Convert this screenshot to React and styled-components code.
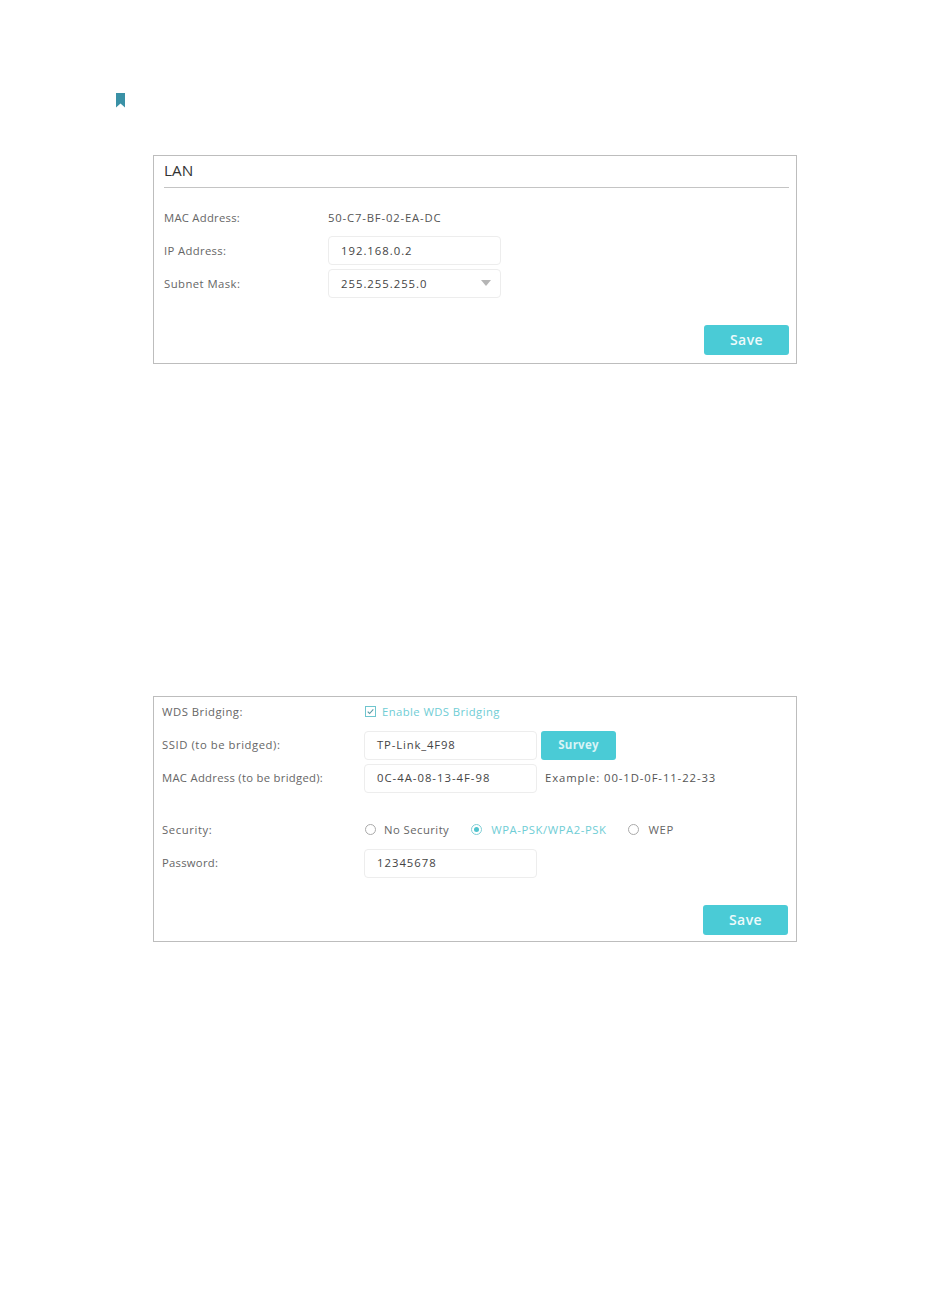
import React from "react";
import styled, { createGlobalStyle } from "styled-components";

const Global = createGlobalStyle`
  html, body { margin: 0; padding: 0; background: #fff; }
  body { font-family: "Open Sans", "Liberation Sans", sans-serif; color: #555; }
`;

const Page = styled.div`
  width: 950px;
  height: 1306px;
  box-sizing: border-box;
  padding-top: 93px;
  overflow: hidden;
`;

const NoteRow = styled.div`
  padding-left: 116px;
  height: 15px;
  display: flex;
`;

const Panel = styled.section`
  --raise: ${(p) => p.$raise || 0}px;
  box-sizing: border-box;
  width: 644px;
  margin-left: 153px;
  margin-top: ${(p) => p.$top}px;
  height: ${(p) => p.$height}px;
  border: 1px solid #bdbdbd;
  padding: ${(p) => p.$padding};
  display: flex;
  flex-direction: column;
`;

const Title = styled.h2`
  margin: 0 0 13px;
  height: 32px;
  box-sizing: border-box;
  border-bottom: 1px solid #c4c4c4;
  font-size: 15.3px;
  font-weight: 400;
  line-height: 29px;
  color: #333;
`;

const Row = styled.div`
  display: flex;
  align-items: center;
  height: ${(p) => p.$h || 33}px;
  margin-top: ${(p) => p.$mt || 0}px;
  margin-bottom: ${(p) => p.$mb || 0}px;
`;

const Label = styled.div`
  width: ${(p) => p.$w}px;
  flex: none;
  box-sizing: border-box;
  padding-bottom: var(--raise);
  font-size: 11.3px;
  letter-spacing: ${(p) => p.$ls || 0.3}px;
  color: #666;
`;

const Value = styled.div`
  font-size: 11.3px;
  letter-spacing: 0.82px;
  color: #555;
`;

const Field = styled.div`
  box-sizing: border-box;
  position: relative;
  width: 173px;
  height: 29px;
  border: 1px solid #ededed;
  border-radius: 4px;
  padding-left: 12px;
  padding-bottom: var(--raise);
  display: flex;
  align-items: center;
  font-size: 11.3px;
  letter-spacing: ${(p) => p.$ls || 1}px;
  color: #444;
`;

const Caret = styled.span`
  position: absolute;
  right: 9px;
  top: 10px;
  width: 0;
  height: 0;
  border-left: 5px solid transparent;
  border-right: 5px solid transparent;
  border-top: 6px solid #b5b5b5;
`;

const Button = styled.button`
  box-sizing: border-box;
  border: 0;
  border-radius: 3px;
  background: #4acbd6;
  color: ${(p) => p.$color};
  font-family: inherit;
  padding: 0 0 2px;
  font-size: ${(p) => p.$size}px;
  font-weight: ${(p) => p.$weight};
  letter-spacing: ${(p) => p.$ls}px;
  width: ${(p) => p.$w}px;
  height: ${(p) => p.$h}px;
  margin-left: ${(p) => p.$ml || 0}px;
`;

const Footer = styled.div`
  margin-top: auto;
  display: flex;
  justify-content: flex-end;
`;

const Hint = styled.div`
  margin-left: 8px;
  padding-bottom: var(--raise);
  font-size: 11.3px;
  letter-spacing: 0.9px;
  color: #555;
`;

const CheckWrap = styled.div`
  display: flex;
  align-items: center;
  gap: 6px;
  padding-left: 1px;
  padding-bottom: var(--raise);
  font-size: 11.3px;
  letter-spacing: 0.41px;
  color: #6fcdd5;
`;

const RadioOption = styled.div`
  display: flex;
  align-items: center;
  gap: ${(p) => p.$gap}px;
  margin-right: ${(p) => p.$mr}px;
  font-size: 11.3px;
  letter-spacing: ${(p) => p.$ls}px;
  color: ${(p) => (p.$on ? "#6fcdd5" : "#666")};
`;

const RadioGroup = styled.div`
  display: flex;
  align-items: center;
  padding-left: 1px;
  padding-bottom: var(--raise);
`;

const Ring = styled.span`
  box-sizing: border-box;
  width: 11px;
  height: 11px;
  border-radius: 50%;
  border: 1px solid ${(p) => (p.$on ? "#7fcfd6" : "#aaa")};
  display: flex;
  align-items: center;
  justify-content: center;
  &::after {
    content: "";
    display: ${(p) => (p.$on ? "block" : "none")};
    width: 5px;
    height: 5px;
    border-radius: 50%;
    background: #4fc3cd;
  }
`;

const Bookmark = () => (
  <svg width="9" height="15" viewBox="0 0 9 15" aria-hidden="true">
    <path d="M0 0H9V14.5L4.5 10.5L0 14.5Z" fill="#3a91a6" />
  </svg>
);

const CheckBox = () => (
  <svg width="11" height="11" viewBox="0 0 11 11" aria-hidden="true">
    <rect x="0.5" y="0.5" width="10" height="10" fill="none" stroke="#6fc5ce" />
    <path d="M2.7 5.6L4.6 7.5L8.3 3.4" fill="none" stroke="#5a9aa5" strokeWidth="1.1" />
  </svg>
);

const SaveButton = () => (
  <Button $w={85} $h={30} $size={14} $ls={0.4} $weight={600} $color="#eefafb">Save</Button>
);

export default function App() {
  return (
    <Page>
      <Global />
      <NoteRow>
        <Bookmark />
      </NoteRow>
      <Panel $top={47} $height={209} $padding="0 7px 8px 10px">
        <Title>LAN</Title>
        <Row>
          <Label $w={164} $ls={0.25}>MAC Address:</Label>
          <Value>50-C7-BF-02-EA-DC</Value>
        </Row>
        <Row>
          <Label $w={164} $ls={0.35}>IP Address:</Label>
          <Field>192.168.0.2</Field>
        </Row>
        <Row>
          <Label $w={164} $ls={0.45}>Subnet Mask:</Label>
          <Field>
            255.255.255.0
            <Caret />
          </Field>
        </Row>
        <Footer>
          <SaveButton />
        </Footer>
      </Panel>
      <Panel $top={332} $height={246} $padding="0 8px 6px 8px" $raise={2}>
        <Row $h={30} $mb={2}>
          <Label $w={202} $ls={0.5}>WDS Bridging:</Label>
          <CheckWrap>
            <CheckBox />
            Enable WDS Bridging
          </CheckWrap>
        </Row>
        <Row>
          <Label $w={202} $ls={0.55}>SSID (to be bridged):</Label>
          <Field $ls={0.85}>TP-Link_4F98</Field>
          <Button $w={75} $h={29} $size={11.5} $ls={0.25} $weight={700} $color="#d8f4f6" $ml={4}>Survey</Button>
        </Row>
        <Row>
          <Label $w={202} $ls={0.28}>MAC Address (to be bridged):</Label>
          <Field>0C-4A-08-13-4F-98</Field>
          <Hint>Example: 00-1D-0F-11-22-33</Hint>
        </Row>
        <Row $mt={19}>
          <Label $w={202} $ls={0.6}>Security:</Label>
          <RadioGroup>
            <RadioOption $mr={22} $gap={8} $ls={0.45}><Ring />No Security</RadioOption>
            <RadioOption $mr={22} $gap={9} $ls={0.55} $on><Ring $on />WPA-PSK/WPA2-PSK</RadioOption>
            <RadioOption $mr={0} $gap={9} $ls={0.7}><Ring />WEP</RadioOption>
          </RadioGroup>
        </Row>
        <Row>
          <Label $w={202} $ls={0.25}>Password:</Label>
          <Field>12345678</Field>
        </Row>
        <Footer>
          <SaveButton />
        </Footer>
      </Panel>
    </Page>
  );
}
